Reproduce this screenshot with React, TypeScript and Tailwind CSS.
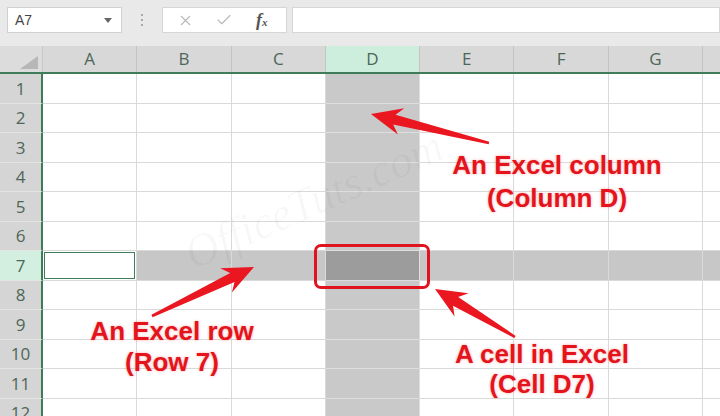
import { X, Check } from "lucide-react"

const COLS = ["A", "B", "C", "D", "E", "F", "G", "H"]
const ROWS = [1, 2, 3, 4, 5, 6, 7, 8, 9, 10, 11, 12]

type Pt = [number, number]

// tapered arrow with a notched head, from tail to tip
function arrowPoints(tail: Pt, tip: Pt) {
  const dx = tip[0] - tail[0]
  const dy = tip[1] - tail[1]
  const len = Math.hypot(dx, dy)
  const ux = dx / len
  const uy = dy / len
  const nx = -uy
  const ny = ux
  const headLen = 31
  const headHalf = 13.5
  const notch = 7
  const p = (base: Pt, along: number, side: number): string =>
    `${base[0] + ux * along + nx * side},${base[1] + uy * along + ny * side}`
  return [
    p(tail, 0, 1.3),
    p(tip, -(headLen - notch), 5),
    p(tip, -headLen, headHalf),
    p(tip, 0, 0),
    p(tip, -headLen, -headHalf),
    p(tip, -(headLen - notch), -5),
    p(tail, 0, -1.3),
  ].join(" ")
}

function cellBg(col: string, row: number) {
  if (col === "D" && row === 7) return "bg-[#9c9c9c]"
  if (col === "D") return "bg-[#c9c9c9]"
  if (row === 7 && col !== "A") return "bg-[#c7c7c7]"
  return "bg-white"
}

export default function App() {
  return (
    <div className="relative w-[720px] h-[416px] overflow-hidden bg-white font-['Open_Sans',sans-serif]">
      {/* Formula bar */}
      <div className="flex items-start h-[46px] bg-[#e9e9e9] pt-[7px] pl-[7px] gap-[5px]">
        <div className="flex items-center justify-between w-[115px] h-[26px] bg-white border border-[#d0d0d0] pl-[7px] pr-[9px]">
          <span className="text-[14px] text-[#444] font-['Liberation_Sans',sans-serif]">A7</span>
          <span className="w-0 h-0 border-l-[4px] border-r-[4px] border-t-[5px] border-l-transparent border-r-transparent border-t-[#666]" />
        </div>
        <div className="flex flex-col items-center justify-center gap-[3px] w-[30px] h-[26px]">
          <span className="w-[2px] h-[2px] bg-[#a8a8a8]" />
          <span className="w-[2px] h-[2px] bg-[#a8a8a8]" />
          <span className="w-[2px] h-[2px] bg-[#a8a8a8]" />
        </div>
        <div className="flex items-center w-[125px] h-[26px] bg-white border border-[#d6d6d6]">
          <X className="w-[17px] h-[17px] ml-[14px] text-[#b8b8b8]" strokeWidth={1.5} />
          <Check className="w-[18px] h-[18px] ml-[21px] text-[#b8b8b8]" strokeWidth={1.5} />
          <span className="ml-[23px] text-[18px] italic font-bold text-[#555] font-['Liberation_Serif',serif] leading-none">
            f<span className="text-[11px]">x</span>
          </span>
        </div>
        <div className="flex-1 h-[26px] bg-white border border-[#d6d6d6]" />
      </div>

      {/* Column headers */}
      <div className="flex h-[28px] border-b-2 border-[#3f7d5a]">
        <div className="relative w-[43px] shrink-0 bg-[#dcdcdc] border-r border-[#c8c8c8]">
          <svg className="absolute right-[4px] bottom-[3px]" width="18" height="13" viewBox="0 0 18 13">
            <polygon points="18,0 18,13 0,13" fill="#b7b7b7" />
          </svg>
        </div>
        {COLS.map((c) => (
          <div
            key={c}
            className={`w-[94.3px] shrink-0 flex items-center justify-center border-r border-[#c4c4c4] text-[17px] text-[#4e6658] ${
              c === "D" ? "bg-[#cdeedc]" : "bg-[#d8d8d8]"
            }`}
          >
            {c === "H" ? "" : c}
          </div>
        ))}
      </div>

      {/* Grid */}
      <div className="flex flex-col">
        {ROWS.map((r) => (
          <div key={r} className="flex h-[29.5px]">
            <div
              className={`w-[43px] shrink-0 flex items-center justify-center border-r-2 border-r-[#3f7d5a] border-b border-b-[#e4e4e4] text-[17px] text-[#4e6658] ${
                r === 7 ? "bg-[#d2efe0]" : "bg-[#d5d5d5]"
              }`}
            >
              {r}
            </div>
            {COLS.map((c) => (
              <div
                key={c}
                className={`relative w-[94.3px] shrink-0 border-r border-b ${
                  c === "D" ? "border-[#dedede]" : "border-[#d9d9d9]"
                } ${cellBg(c, r)}`}
              >
                {c === "A" && r === 7 && (
                  <div className="absolute inset-x-[1px] inset-y-[1px] border border-[#3f7d5a]" />
                )}
              </div>
            ))}
          </div>
        ))}
      </div>

      {/* Watermark */}
      <div className="absolute left-[175px] top-[165px] -rotate-[24deg] text-[46px] italic text-black/[0.03] font-['Liberation_Serif',serif] pointer-events-none">
        OfficeTuts.com
      </div>

      {/* Highlight of cell D7 */}
      <div className="absolute left-[314px] top-[244px] w-[116px] h-[45px] rounded-[7px] border-[3px] border-[#e0141e]" />

      {/* Arrows */}
      <svg className="absolute inset-0 pointer-events-none" width="720" height="416">
        <polygon points={arrowPoints([489, 143], [371, 114])} fill="#ea1620" />
        <polygon points={arrowPoints([152, 316], [254, 267])} fill="#ea1620" />
        <polygon points={arrowPoints([515, 337], [435, 289])} fill="#ea1620" />
      </svg>

      {/* Labels */}
      <div className="absolute left-[437px] top-[149px] w-[240px] text-center text-[26px] leading-[33px] font-bold text-[#e4141c] font-['Liberation_Sans',sans-serif] [text-shadow:0_0_3px_rgba(255,90,90,0.5)]">
        <div>An Excel column</div>
        <div>(Column D)</div>
      </div>
      <div className="absolute left-[52px] top-[316px] w-[240px] text-center text-[26px] leading-[31px] font-bold text-[#e4141c] font-['Liberation_Sans',sans-serif] [text-shadow:0_0_3px_rgba(255,90,90,0.5)]">
        <div>An Excel row</div>
        <div>(Row 7)</div>
      </div>
      <div className="absolute left-[422px] top-[339px] w-[240px] text-center text-[26px] leading-[30px] font-bold text-[#e4141c] font-['Liberation_Sans',sans-serif] [text-shadow:0_0_3px_rgba(255,90,90,0.5)]">
        <div>A cell in Excel</div>
        <div>(Cell D7)</div>
      </div>
    </div>
  )
}
